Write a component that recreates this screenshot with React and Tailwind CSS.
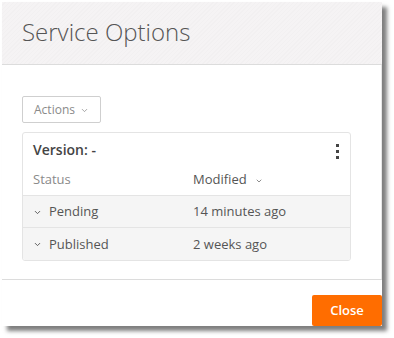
import { ChevronDown } from 'lucide-react';

const rows = [
  { status: 'Pending', modified: '14 minutes ago' },
  { status: 'Published', modified: '2 weeks ago' },
];

export default function App() {
  return (
    <div className="w-[394px] h-[338px] bg-white overflow-hidden" style={{ fontFamily: '"Open Sans", "Noto Sans", sans-serif' }}>
      <div className="ml-[2px] mt-[2px] w-[380px] h-[324px] bg-white flex flex-col shadow-[5px_5px_4px_rgba(0,0,0,0.5)]">
        {/* Header */}
        <div className="h-[63px] shrink-0 border-b border-[#dcdcdc] flex items-center pl-[20px] bg-[repeating-linear-gradient(135deg,#f5f3f4_0px,#f5f3f4_2px,#f2f0f1_2px,#f2f0f1_3px)]">
          <h1 className="text-[24px] font-light text-[#555] leading-none -mt-[2px]">Service Options</h1>
        </div>

        {/* Body */}
        <div className="flex-1 px-[20px] pt-[31px] border-r border-[#e6e6e6]">
          <button className="h-[27px] w-[79px] border border-[#cfcfcf] rounded-[2px] flex items-center justify-center gap-[5px] text-[12px] text-[#8a8a8a]">
            Actions
            <ChevronDown className="w-[9px] h-[9px] mt-[1px]" strokeWidth={2} />
          </button>

          <div className="mt-[9px] w-[329px] border border-[#e4e4e4] rounded-[3px] overflow-hidden">
            <div className="h-[32px] flex items-center justify-between pl-[10px] pr-[11px]">
              <span className="text-[14px] font-semibold text-[#444] mt-[1px]">Version: -</span>
              <div className="flex flex-col gap-[3px] mt-[5px]">
                <span className="w-[3px] h-[3px] bg-[#444]" />
                <span className="w-[3px] h-[3px] bg-[#444]" />
                <span className="w-[3px] h-[3px] bg-[#444]" />
              </div>
            </div>
            <div className="h-[31px] flex items-center border-b border-[#e4e4e4] text-[13px]">
              <span className="w-[170px] pl-[10px] text-[#8a8a8a]">Status</span>
              <span className="text-[#555] flex items-center gap-[8px]">
                Modified
                <ChevronDown className="w-[8px] h-[8px] mt-[2px] text-[#777]" strokeWidth={2.5} />
              </span>
            </div>
            {rows.map((r, i) => (
              <div key={r.status} className={`h-[32px] flex items-center bg-[#f5f5f5] text-[13px] text-[#555] ${i === 0 ? 'border-b border-[#e4e4e4]' : ''}`}>
                <span className="w-[170px] pl-[10px] flex items-center gap-[7px] mt-[1px]">
                  <ChevronDown className="w-[9px] h-[9px] text-[#555]" strokeWidth={2.5} />
                  {r.status}
                </span>
                <span className="mt-[1px]">{r.modified}</span>
              </div>
            ))}
          </div>
        </div>

        {/* Footer */}
        <div className="h-[47px] shrink-0 border-t border-[#dcdcdc] flex items-end justify-end">
          <button className="w-[70px] h-[31px] bg-[#ff6d00] rounded-[2px] text-white text-[13px] font-semibold">
            Close
          </button>
        </div>
      </div>
    </div>
  );
}
